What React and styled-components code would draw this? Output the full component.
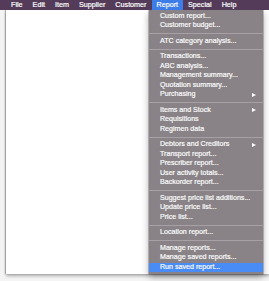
import styled, { createGlobalStyle } from 'styled-components';

const GlobalStyle = createGlobalStyle`
  html, body {
    margin: 0;
    padding: 0;
    background: #ffffff;
  }
  body {
    font-family: "Liberation Sans", Arial, sans-serif;
  }
`;

const Screen = styled.div`
  width: 269px;
  height: 281px;
  display: flex;
  flex-direction: column;
  overflow: hidden;
  background: #f4f4f4;
`;

const MenuBar = styled.div`
  height: 10px;
  flex-shrink: 0;
  display: flex;
  align-items: stretch;
  padding-left: 6px;
  background: #543b59;
  position: relative;
  z-index: 2;
`;

const MenuTitle = styled.div`
  padding: 0 5px;
  display: flex;
  align-items: center;
  color: #ffffff;
  font-size: 7.2px;
  line-height: 10px;
  -webkit-text-stroke: 0.2px #ffffff;
  background: ${(p) => (p.$active ? '#3d7de8' : 'transparent')};
`;

const Desk = styled.div`
  flex: 1;
  position: relative;
  display: flex;
  flex-direction: column;
  padding: 0 0 7px 6px;
`;

const Window = styled.div`
  flex: 1;
  background: #ffffff;
  box-shadow: -1px 0 1px rgba(0, 0, 0, 0.25), 0 2px 3px rgba(0, 0, 0, 0.3);
`;

const Dropdown = styled.div`
  position: absolute;
  left: 149px;
  top: 0;
  width: 114px;
  padding: 1.5px 0;
  background: #898387;
  box-shadow: 0 0 0 0.5px rgba(40, 30, 40, 0.5), 0 3px 7px rgba(0, 0, 0, 0.35);
  display: flex;
  flex-direction: column;
`;

const Item = styled.div`
  height: 9.5px;
  display: flex;
  align-items: center;
  justify-content: space-between;
  padding: 0 7px 0 11px;
  color: #fbfbfb;
  font-size: 7.1px;
  line-height: 9.5px;
  white-space: nowrap;
  -webkit-text-stroke: 0.2px #fbfbfb;
  background: ${(p) => (p.$selected ? '#4a8cf6' : 'transparent')};
`;

const Arrow = styled.span`
  width: 0;
  height: 0;
  border-left: 4px solid #ffffff;
  border-top: 2.5px solid transparent;
  border-bottom: 2.5px solid transparent;
`;

const Separator = styled.div`
  height: 6px;
  display: flex;
  align-items: center;

  &::after {
    content: '';
    flex: 1;
    height: 1px;
    background: #a7a1a5;
  }
`;

const titles = ['File', 'Edit', 'Item', 'Supplier', 'Customer', 'Report', 'Special', 'Help'];

const entries = [
  'Custom report...',
  'Customer budget...',
  '-',
  'ATC category analysis...',
  '-',
  'Transactions...',
  'ABC analysis...',
  'Management summary...',
  'Quotation summary...',
  '>Purchasing',
  '-',
  '>Items and Stock',
  'Requisitions',
  'Regimen data',
  '-',
  '>Debtors and Creditors',
  'Transport report...',
  'Prescriber report...',
  'User activity totals...',
  'Backorder report...',
  '-',
  'Suggest price list additions...',
  'Update price list...',
  'Price list...',
  '-',
  'Location report...',
  '-',
  'Manage reports...',
  'Manage saved reports...',
  'Run saved report...',
];

export default function App() {
  return (
    <>
      <GlobalStyle />
      <Screen>
        <MenuBar>
          {titles.map((t) => (
            <MenuTitle key={t} $active={t === 'Report'}>{t}</MenuTitle>
          ))}
        </MenuBar>
        <Desk>
          <Window />
          <Dropdown>
            {entries.map((e, i) => {
              if (e === '-') return <Separator key={i} />;
              const sub = e.startsWith('>');
              const label = sub ? e.slice(1) : e;
              return (
                <Item key={i} $selected={label === 'Run saved report...'}>
                  <span>{label}</span>
                  {sub && <Arrow />}
                </Item>
              );
            })}
          </Dropdown>
        </Desk>
      </Screen>
    </>
  );
}
